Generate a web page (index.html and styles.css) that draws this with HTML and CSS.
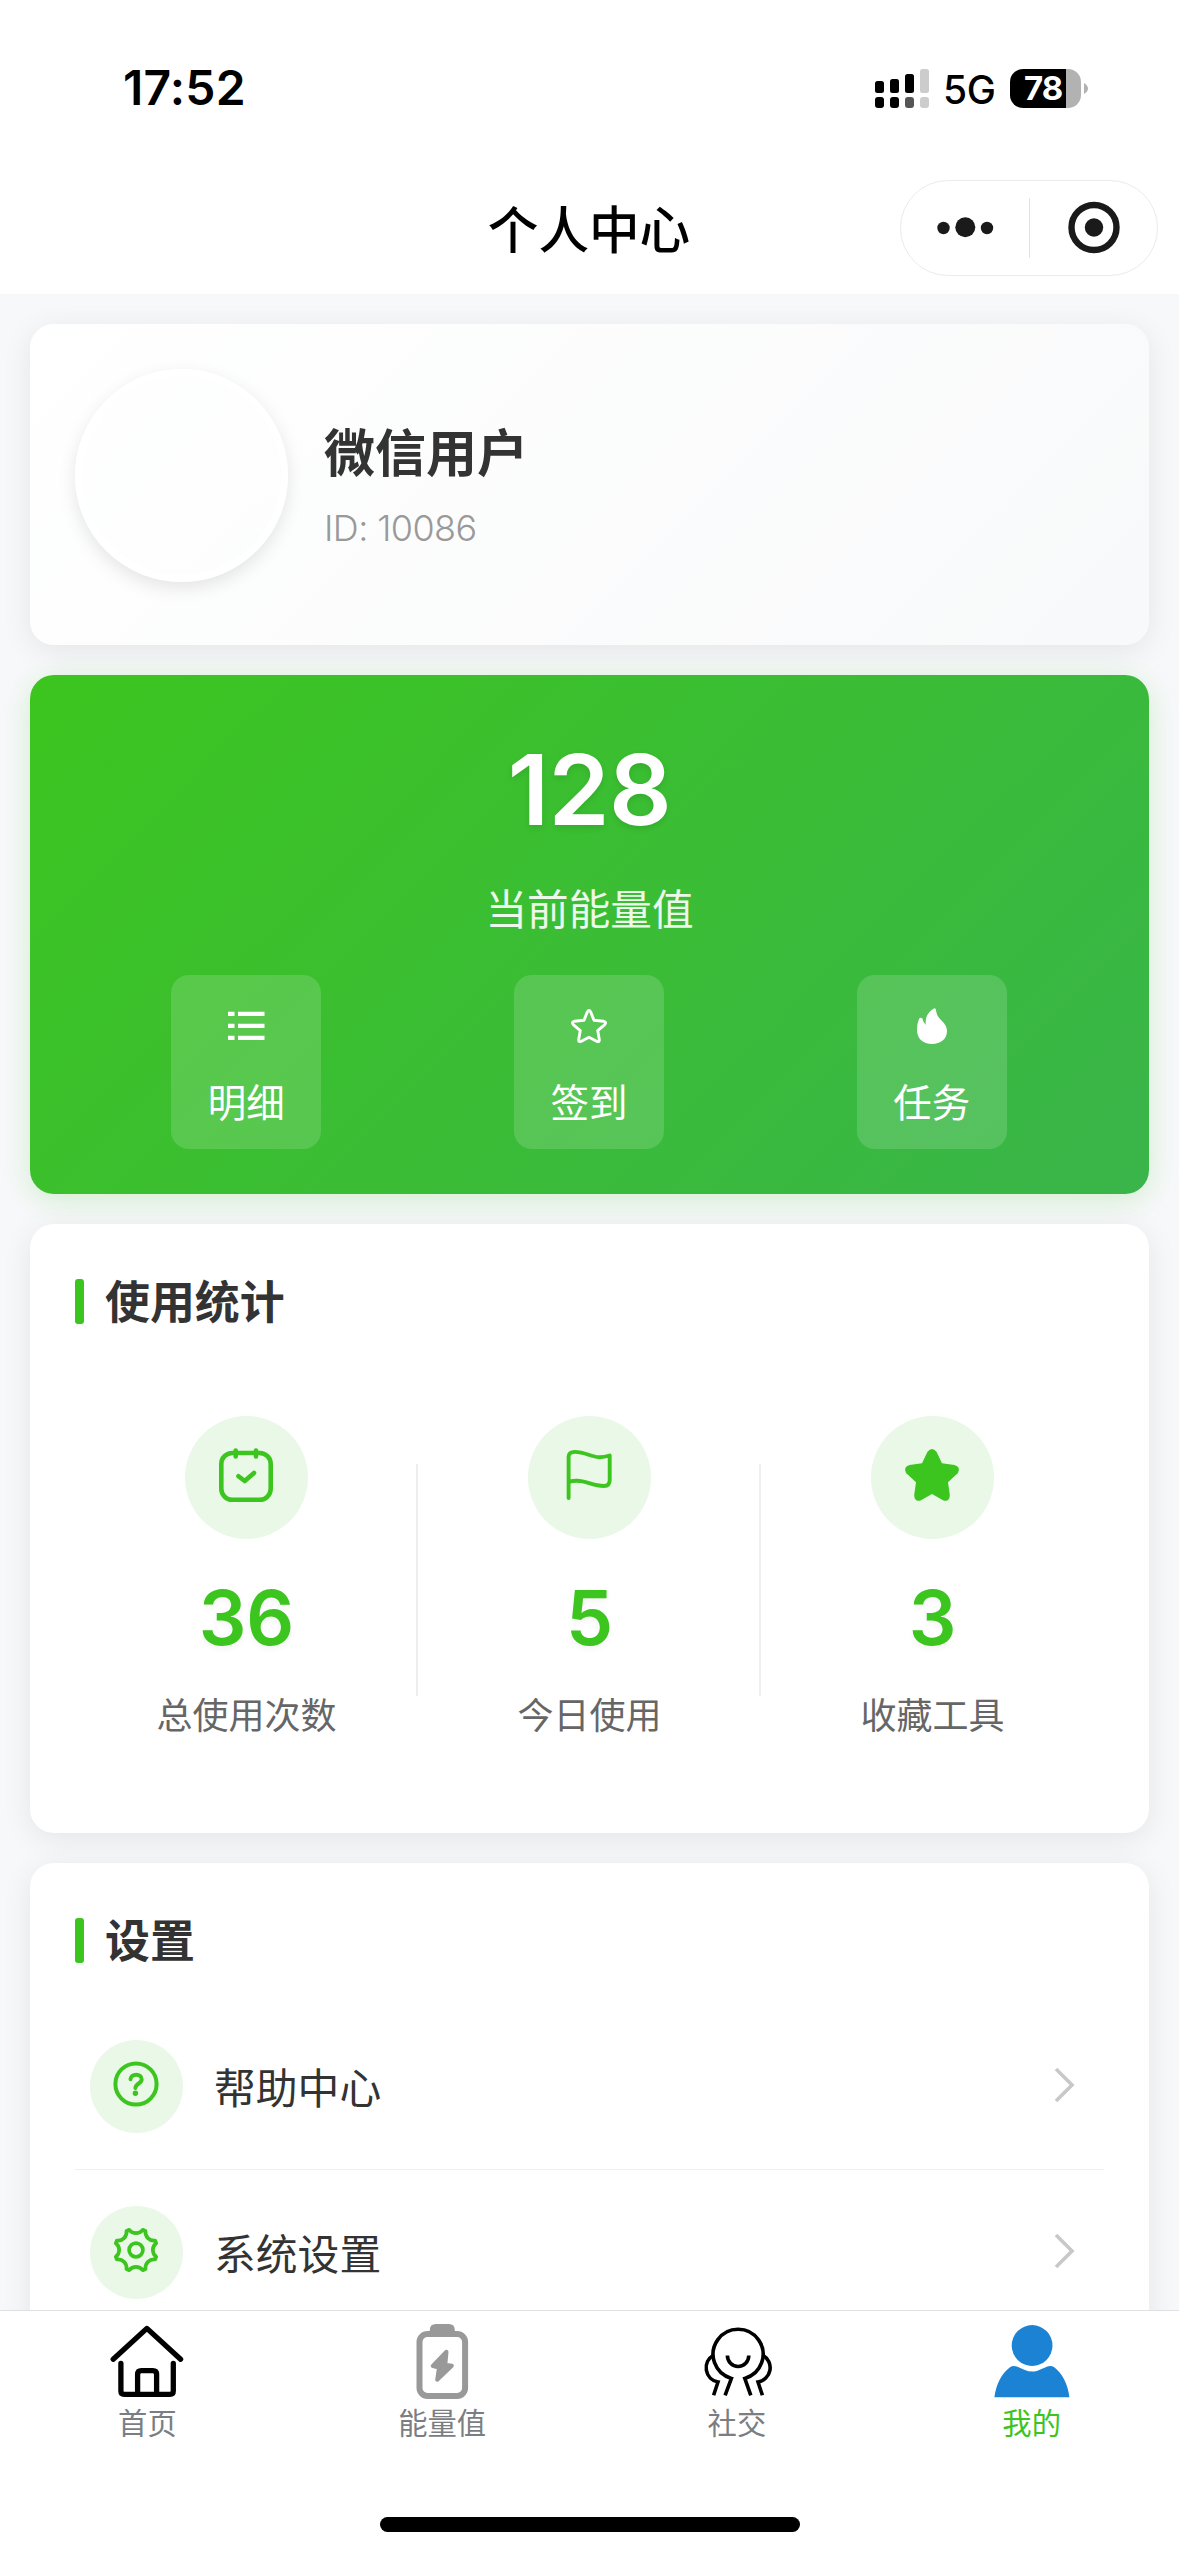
FILE: index.html
```html
<!DOCTYPE html>
<html lang="zh-CN">
<head>
<meta charset="utf-8">
<title>个人中心</title>
<link rel="stylesheet" href="styles.css">
</head>
<body>
<header class="header">
  <div class="status">
    <span class="status-time">17:52</span>
    <div class="status-right">
      <svg class="signal" width="54" height="39" viewBox="0 0 54 39">
        <rect x="0" y="12" width="9" height="12" rx="2.5"/>
        <rect x="15" y="10" width="9" height="14" rx="2.5"/>
        <rect x="30" y="5" width="9" height="19" rx="2.5"/>
        <rect x="45" y="0" width="9" height="24" rx="2.5" fill="#ccc"/>
        <rect x="0" y="28" width="9" height="11" rx="3"/>
        <rect x="15" y="28" width="9" height="11" rx="3"/>
        <rect x="30" y="28" width="9" height="11" rx="3" fill="#555"/>
        <rect x="45" y="28" width="9" height="11" rx="3" fill="#ccc"/>
      </svg>
      <span class="network">5G</span>
      <div class="battery"><span class="battery-level">78</span></div>
      <svg class="battery-nub" width="4" height="11" viewBox="0 0 4 11"><path d="M0 0Q4 2.500 4 5.500Q4 8.500 0 11Z" fill="#b2b2b2"/></svg>
    </div>
  </div>
  <nav class="nav">
    <h1 class="nav-title">个人中心</h1>
    <div class="capsule">
      <svg width="128" height="94" viewBox="0 0 128 94"><circle cx="42.500" cy="47" r="6.200"/><circle cx="64.300" cy="46.300" r="10"/><circle cx="86" cy="47" r="6.200"/></svg>
      <span class="capsule-line"></span>
      <svg width="127" height="94" viewBox="0 0 127 94"><circle cx="64" cy="46.500" r="22.500" fill="none" stroke="#1a1a1a" stroke-width="6.400"/><circle cx="64" cy="46.500" r="9.200"/></svg>
    </div>
  </nav>
</header>

<main class="content">
  <section class="card profile">
    <div class="avatar"></div>
    <div class="profile-info">
      <div class="profile-name">微信用户</div>
      <div class="profile-id">ID: 10086</div>
    </div>
  </section>

  <section class="energy">
    <div class="energy-value">128</div>
    <div class="energy-label">当前能量值</div>
    <div class="energy-actions">
      <div class="action">
        <svg width="37" height="36" viewBox="0 0 37 36"><path d="M0 3.700h6.500v4.300h-6.500zM10 3.700h26.500v4.300h-26.500zM0 15.800h6.500v4.300h-6.500zM10 15.800h26.500v4.300h-26.500zM0 27.800h6.500v4.300h-6.500zM10 27.800h26.500v4.300h-26.500z" fill="#fff"/></svg>
        <span>明细</span>
      </div>
      <div class="action">
        <svg width="36" height="36" viewBox="0 0 36 36"><path d="M13 12.200L16.300 4Q18 1 19.700 4L23 12.200L32.500 13.200Q36 14 33.500 16.800L26.700 22.600L28.300 31.500Q28.600 34.700 25.600 33.200L18 29.200L10.400 33.200Q7.400 34.700 7.700 31.500L9.300 22.600L2.500 16.800Q0 14 3.500 13.200Z" fill="none" stroke="#fff" stroke-width="2.900" stroke-linejoin="round"/></svg>
        <span>签到</span>
      </div>
      <div class="action">
        <svg width="36" height="36" viewBox="0 0 36 36"><path d="M20.300.2Q22 0 22.200 3.500Q22.800 8 27 12Q33 17.500 33 23C33 31 26.500 36 18 36C9 36 3 30.500 3 22Q3 15 5.200 10.500Q6.800 8.800 8.400 10.500Q9.500 15 11.800 17Q10.500 5.500 20.300.2Z" fill="#fff"/></svg>
        <span>任务</span>
      </div>
    </div>
  </section>

  <section class="card stats">
    <h2 class="card-title"><span>使用统计</span></h2>
    <div class="stats-grid">
      <div class="stat">
        <div class="stat-icon">
          <svg width="60" height="60" viewBox="0 0 60 60"><rect x="5.300" y="8" width="49.400" height="46.800" rx="11"/><path d="M19.700 5.500V11.500M40 5.500V11.500M22.500 31.200L28.700 36L38 28"/></svg>
        </div>
        <div class="stat-number">36</div>
        <div class="stat-label">总使用次数</div>
      </div>
      <div class="stat">
        <div class="stat-icon">
          <svg width="60" height="60" viewBox="0 0 60 60"><path stroke-width="3.900" d="M9.600 53V12Q9.600 7 16 6.900C26 6.900 32 12 40 12.200Q45 12.300 50.700 10.500V35Q50.700 41 45 41C33 41 28 35.800 18 35.700Q14 35.600 9.600 37"/></svg>
        </div>
        <div class="stat-number">5</div>
        <div class="stat-label">今日使用</div>
      </div>
      <div class="stat">
        <div class="stat-icon">
          <svg width="60" height="60" viewBox="0 0 60 60"><path class="solid" d="M20 18.300L25.500 6.800Q30 1.200 34.500 6.800L40 18.300L52.500 20Q59 22 56 28L46 37.300L47.800 50Q47.500 57.500 41 55.200L30 49L19 55.200Q12.500 57.500 12.200 50L14 37.300L4 28Q1 22 7.500 20Z"/></svg>
        </div>
        <div class="stat-number">3</div>
        <div class="stat-label">收藏工具</div>
      </div>
    </div>
  </section>

  <section class="card settings">
    <h2 class="card-title"><span>设置</span></h2>
    <div class="rows">
      <div class="row">
        <div class="row-icon">
          <svg width="48" height="48" viewBox="-24 -24 48 48"><circle r="20.600"/><path d="M-5.500 -4.800C-5.200 -10.800 5.700 -11 5.700 -4.600C5.700 -.6 -.4 -.4 -.6 4"/><circle class="solid" cx="-.6" cy="9.300" r="2.700"/></svg>
        </div>
        <span class="row-label">帮助中心</span>
        <svg class="chevron" width="24" height="40" viewBox="0 0 24 40"><path d="M3 4L19 20L3 36"/></svg>
      </div>
      <div class="row">
        <div class="row-icon">
          <svg width="48" height="48" viewBox="-24 -24 48 48"><g stroke-width="3.700"><path d="M20.200 6.760L19.060 9.500A8.500 8.500 0 0 0 9.500 19.060L6.760 20.200A8.500 8.500 0 0 0 -6.760 20.200L-9.500 19.060A8.500 8.500 0 0 0 -19.060 9.500L-20.200 6.760A8.500 8.500 0 0 0 -20.200 -6.760L-19.060 -9.500A8.500 8.500 0 0 0 -9.500 -19.060L-6.760 -20.200A8.500 8.500 0 0 0 6.760 -20.200L9.500 -19.060A8.500 8.500 0 0 0 19.060 -9.500L20.200 -6.760A8.500 8.500 0 0 0 20.200 6.760Z"/><circle r="6.900"/></g></svg>
        </div>
        <span class="row-label">系统设置</span>
        <svg class="chevron" width="24" height="40" viewBox="0 0 24 40"><path d="M3 4L19 20L3 36"/></svg>
      </div>
    </div>
  </section>
</main>

<footer class="tabbar">
  <div class="tabs">
    <div class="tab">
      <svg width="78" height="78" viewBox="0 0 78 78"><g fill="none" stroke="#000" stroke-width="5.300" stroke-linecap="round" stroke-linejoin="round"><path d="M5.200 37.200L38.900 6.400L72.600 37.200"/><path d="M12.900 41.500V69Q12.900 72.300 16.200 72.300H62Q65.300 72.300 65.300 69V41.500"/><path d="M29.600 72V52.500Q29.600 48.700 33.400 48.700H44.800Q48.600 48.700 48.600 52.500V72"/></g></svg>
      <span>首页</span>
    </div>
    <div class="tab">
      <svg width="78" height="78" viewBox="0 0 78 78"><rect x="16.500" y="12" width="45.600" height="62" rx="8" fill="none" stroke="#999" stroke-width="6"/><path d="M26.800 12V8Q26.800 2 32.800 2H45.800Q51.800 2 51.800 8V12Z" fill="#999"/><path d="M43.500 29.700L29.800 44L36 45.500L34.200 57.800L48.800 43.700L42.300 42.800Z" fill="#999" stroke="#999" stroke-width="4" stroke-linejoin="round"/></svg>
      <span>能量值</span>
    </div>
    <div class="tab">
      <svg width="78" height="78" viewBox="0 0 78 78"><g fill="none" stroke="#000" stroke-width="3.600"><path d="M27.100 73.300L33.400 56.400A25 25 0 1 1 46.800 56.400L52.800 73.300"/><path d="M15.400 33.200A14.500 14.500 0 0 0 20 60L15.600 73.300"/><path d="M65 33.200A14.500 14.500 0 0 1 60 60L64.400 73.300"/><path d="M29.400 33.500A10.700 11 0 0 0 50.800 33.500"/></g></svg>
      <span>社交</span>
    </div>
    <div class="tab tab-active">
      <svg width="78" height="78" viewBox="0 0 78 78"><g fill="#1c83d4"><circle cx="39.100" cy="23.500" r="20.400"/><path d="M1.400 75.300C3 62 9 51 17 45.300Q20 43 24.500 44.800C30 47.200 34 49.600 39.100 49.600C44.200 49.600 48 47.200 53.700 44.800Q58.200 43 61.200 45.300C69 51 75 62 76.400 75.300Z"/></g></svg>
      <span>我的</span>
    </div>
  </div>
  <div class="home-indicator"></div>
</footer>
</body>
</html>
```
FILE: styles.css
```css
* {
  box-sizing: border-box;
}

body {
  margin: 0;
  width: 1179px;
  height: 2556px;
  overflow: hidden;
  display: flex;
  flex-direction: column;
  background: #f7f8fa;
  font-family: "Inter", "Noto Sans CJK SC", sans-serif;
  color: #333;
}

svg {
  display: block;
  flex: none;
}

h1,
h2 {
  margin: 0;
}

/* Status bar and navigation */
.header {
  flex: none;
  height: 294px;
  background: #fff;
}

.status {
  height: 162px;
  padding: 14px 91px 0 123px;
  display: flex;
  align-items: center;
  justify-content: space-between;
  color: #000;
}

.status-time {
  font-size: 48px;
  font-weight: 600;
  line-height: 60px;
  letter-spacing: 0.2px;
}

.status-right {
  display: flex;
  align-items: center;
}

.network {
  width: 81px;
  padding: 3px 0 0 14px;
  font-size: 39px;
  font-weight: 500;
  line-height: 48px;
  letter-spacing: -0.3px;
}

.battery {
  width: 71px;
  height: 39px;
  border-radius: 13px;
  overflow: hidden;
  background: linear-gradient(90deg, #000 56px, #b2b2b2 56px);
}

.battery-level {
  display: block;
  padding-left: 14px;
  font-size: 33px;
  font-weight: 700;
  line-height: 39px;
  letter-spacing: -1px;
  color: #fff;
}

.battery-nub {
  margin-left: 3px;
}

.nav {
  height: 132px;
  padding: 0 21px;
  display: grid;
  grid-template-columns: 1fr auto 1fr;
  align-items: center;
}

.nav-title {
  grid-column: 2;
  padding: 5px 1px 0 0;
  font-size: 50.600px;
  font-weight: 500;
  line-height: 72px;
  color: #000;
}

.capsule {
  justify-self: end;
  width: 258px;
  height: 96px;
  display: flex;
  align-items: center;
  border: 1px solid #ebebeb;
  border-radius: 48px;
  fill: #1a1a1a;
}

.capsule-line {
  width: 1px;
  height: 60px;
  background: #e2e2e2;
}

/* Scrolling content */
.content {
  flex: 1;
  min-height: 0;
  overflow: hidden;
  padding: 30px;
  display: flex;
  flex-direction: column;
  gap: 30px;
}

.card {
  flex: none;
  padding: 45px;
  border-radius: 24px;
  background: #fff;
  box-shadow: 0 6px 30px rgba(0, 0, 0, 0.08);
}

.profile {
  height: 321px;
  display: flex;
  align-items: center;
  gap: 36px;
  background: linear-gradient(135deg, #fff 0%, #f8f9fa 100%);
}

.avatar {
  width: 213px;
  height: 213px;
  margin-bottom: 18px;
  border: 7px solid #fff;
  border-radius: 50%;
  box-shadow: 0 6px 18px rgba(0, 0, 0, 0.1);
}

.profile-name {
  padding-top: 3px;
  font-size: 51px;
  font-weight: 700;
  line-height: 72px;
}

.profile-id {
  margin-top: 12px;
  font-size: 36px;
  font-weight: 350;
  line-height: 52px;
  letter-spacing: -0.6px;
  color: #999;
}

.energy {
  flex: none;
  height: 519px;
  padding: 45px;
  border-radius: 24px;
  background: linear-gradient(135deg, #3cc51f 0%, #39b54a 100%);
  box-shadow: 0 6px 30px rgba(60, 197, 31, 0.2);
  color: #fff;
  text-align: center;
}

.energy-value {
  font-size: 98px;
  font-weight: 620;
  line-height: 140px;
  letter-spacing: -0.6px;
  text-shadow: 0 3px 6px rgba(0, 0, 0, 0.1);
}

.energy-label {
  margin-top: 20px;
  font-size: 41.600px;
  line-height: 60px;
  opacity: 0.9;
}

.energy-actions {
  margin-top: 35px;
  padding-right: 1px;
  display: grid;
  grid-template-columns: repeat(3, 1fr);
  justify-items: center;
}

.action {
  width: 150px;
  height: 174px;
  padding-top: 33px;
  display: flex;
  flex-direction: column;
  align-items: center;
  gap: 32px;
  border-radius: 18px;
  background: rgba(255, 255, 255, 0.15);
  font-size: 38.500px;
  line-height: 54px;
}

.card-title {
  display: flex;
  align-items: center;
  gap: 21px;
  font-size: 44.900px;
  font-weight: 600;
  line-height: 64px;
}

.card-title span {
  padding-top: 2px;
  margin-bottom: -2px;
}

.card-title::before {
  content: "";
  width: 9px;
  height: 45px;
  border-radius: 3px;
  background: #3cc51f;
}

/* Usage statistics */
.stats {
  height: 609px;
}

.stats-grid {
  height: 388px;
  margin-top: 53px;
  display: grid;
  grid-template-columns: repeat(3, 1fr);
}

.stat {
  position: relative;
  padding-top: 30px;
  display: flex;
  flex-direction: column;
  align-items: center;
}

.stat:not(:last-child)::after {
  content: "";
  position: absolute;
  top: 20%;
  right: 0;
  width: 2px;
  height: 60%;
  background: #eee;
}

.stat-icon,
.row-icon {
  display: flex;
  align-items: center;
  justify-content: center;
  border-radius: 50%;
  background: #e9f8e7;
  fill: none;
  stroke: #3cc51f;
  stroke-linecap: round;
  stroke-linejoin: round;
}

.stat-icon {
  width: 123px;
  height: 123px;
  padding: 0 1px 5px 0;
  stroke-width: 4.600px;
}

.solid {
  fill: #3cc51f;
  stroke: none;
}

.stat-number {
  margin-top: 33px;
  font-size: 75px;
  font-weight: 600;
  line-height: 92px;
  color: #3cc51f;
  text-shadow: 0 3px 6px rgba(0, 0, 0, 0.05);
}

.stat-label {
  margin-top: 27px;
  font-size: 36px;
  line-height: 50px;
  color: #666;
}

/* Settings list */
.rows {
  margin-top: 32px;
}

.row {
  height: 166px;
  padding: 0 15px;
  display: flex;
  align-items: center;
  border-bottom: 1px solid #eee;
}

.row-icon {
  width: 93px;
  height: 93px;
  padding: 0 1px 6px 0;
  stroke-width: 4px;
}

.row-label {
  flex: 1;
  padding: 4px 0 0 31px;
  font-size: 41.800px;
  line-height: 60px;
}

.chevron {
  margin: 0 12px 3px 0;
  fill: none;
  stroke: #c8c8c8;
  stroke-width: 3.600px;
}

/* Bottom tab bar */
.tabbar {
  flex: none;
  height: 246px;
  padding-bottom: 24px;
  display: flex;
  flex-direction: column;
  align-items: center;
  justify-content: space-between;
  border-top: 1px solid #e0e0e0;
  background: #fff;
}

.tabs {
  width: 100%;
  padding-top: 11px;
  display: grid;
  grid-template-columns: repeat(4, 1fr);
}

.tab {
  display: flex;
  flex-direction: column;
  align-items: center;
  gap: 6px;
  font-size: 29.300px;
  line-height: 36px;
  color: #7a7e83;
}

.tab-active {
  color: #3cc51f;
}

.home-indicator {
  width: 420px;
  height: 15px;
  border-radius: 8px;
  background: #000;
}
```
